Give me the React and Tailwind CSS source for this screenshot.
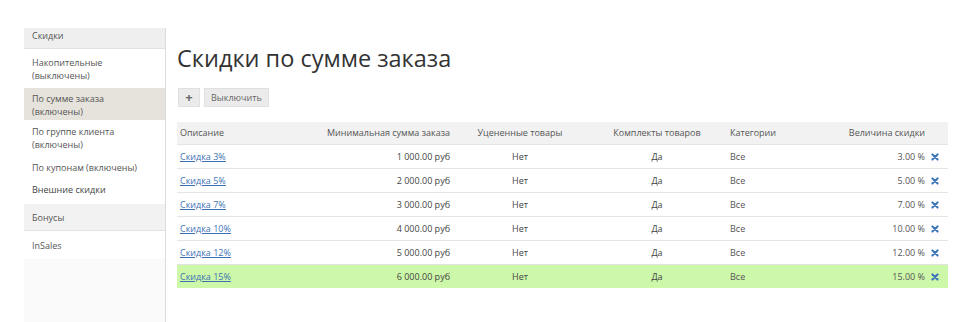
import React from "react";

const rows = [
  ["Скидка 3%", "1 000.00 руб", "3.00 %"],
  ["Скидка 5%", "2 000.00 руб", "5.00 %"],
  ["Скидка 7%", "3 000.00 руб", "7.00 %"],
  ["Скидка 10%", "4 000.00 руб", "10.00 %"],
  ["Скидка 12%", "5 000.00 руб", "12.00 %"],
  ["Скидка 15%", "6 000.00 руб", "15.00 %"],
];

function X() {
  return (
    <svg width="8" height="8" viewBox="0 0 10 10" className="inline-block">
      <path d="M1.8 1.8 L8.2 8.2 M8.2 1.8 L1.8 8.2" stroke="#3d76bb" strokeWidth="2.6" strokeLinecap="round" />
    </svg>
  );
}

export default function App() {
  return (
    <div
      className="w-[973px] h-[322px] bg-white overflow-hidden flex text-[9px] text-[#555]"
      style={{ fontFamily: '"Open Sans", "Noto Sans", sans-serif' }}
    >
      <div className="w-[24px] shrink-0" />
      <div className="w-[142px] shrink-0 mt-[28px] border-r border-[#dcdcdc] flex flex-col leading-[13px]">
        <div className="h-[21px] bg-[#efefef] border-b border-[#e2e2e2] pl-[8px] pt-[1px]">Скидки</div>
        <div className="h-[39px] pl-[8px] pt-[7px]">Накопительные<br />(выключены)</div>
        <div className="h-[32px] bg-[#e6e3dc] pl-[8px] pt-[4px]">По сумме заказа<br />(включены)</div>
        <div className="h-[40px] pl-[8px] pt-[5px]">По группе клиента<br />(включены)</div>
        <div className="h-[22px] pl-[8px] pt-[1px]">По купонам (включены)</div>
        <div className="h-[22px] pl-[8px] pt-[1px] text-[#444]">Внешние скидки</div>
        <div className="h-[27px] bg-[#f2f2f2] border-b border-[#e2e2e2] pl-[8px] flex items-center">Бонусы</div>
        <div className="h-[28px] pl-[8px] flex items-center">InSales</div>
        <div className="flex-1 bg-[#fafafa]" />
      </div>
      <div className="pl-[11px] flex flex-col">
        <div className="mt-[44px] text-[23.5px] leading-[28px] text-[#333] h-[30px]">Скидки по сумме заказа</div>
        <div className="mt-[14px] flex gap-[4px] ml-[1px]">
          <div className="w-[22px] h-[19px] bg-[#ebebeb] border border-[#e0e0e0] flex items-center justify-center text-[#666] font-bold text-[13px] leading-none">+</div>
          <div className="h-[19px] px-[6px] bg-[#ebebeb] border border-[#e0e0e0] flex items-center text-[9px] text-[#666]">Выключить</div>
        </div>
        <div className="mt-[15px] w-[771px]">
          <div className="h-[22px] bg-[#f2f2f2] flex items-center">
            <div className="w-[120px] pl-[3px]">Описание</div>
            <div className="w-[158px] text-right pr-[5px]">Минимальная сумма заказа</div>
            <div className="w-[130px] text-center">Уцененные товары</div>
            <div className="w-[144px] text-center">Комплекты товаров</div>
            <div className="w-[72px] pl-[1px]">Категории</div>
            <div className="w-[124px] text-right">Величина скидки</div>
            <div className="w-[23px]" />
          </div>
          {rows.map((r, i) => (
            <div
              key={i}
              className={
                "h-[24px] flex items-center border-t border-[#e4e4e4] " +
                (i === rows.length - 1 ? "bg-[#cdf7a9]" : "")
              }
            >
              <div className="w-[120px] pl-[3px]">
                <span className="text-[#3c72b4] underline">{r[0]}</span>
              </div>
              <div className="w-[158px] text-right pr-[5px] text-[#444]">{r[1]}</div>
              <div className="w-[130px] text-center text-[#444]">Нет</div>
              <div className="w-[144px] text-center text-[#444]">Да</div>
              <div className="w-[72px] pl-[1px] text-[#555]">Все</div>
              <div className="w-[124px] text-right text-[#555]">{r[2]}</div>
              <div className="w-[23px] pl-[6px] flex items-center"><X /></div>
            </div>
          ))}
        </div>
      </div>
    </div>
  );
}
